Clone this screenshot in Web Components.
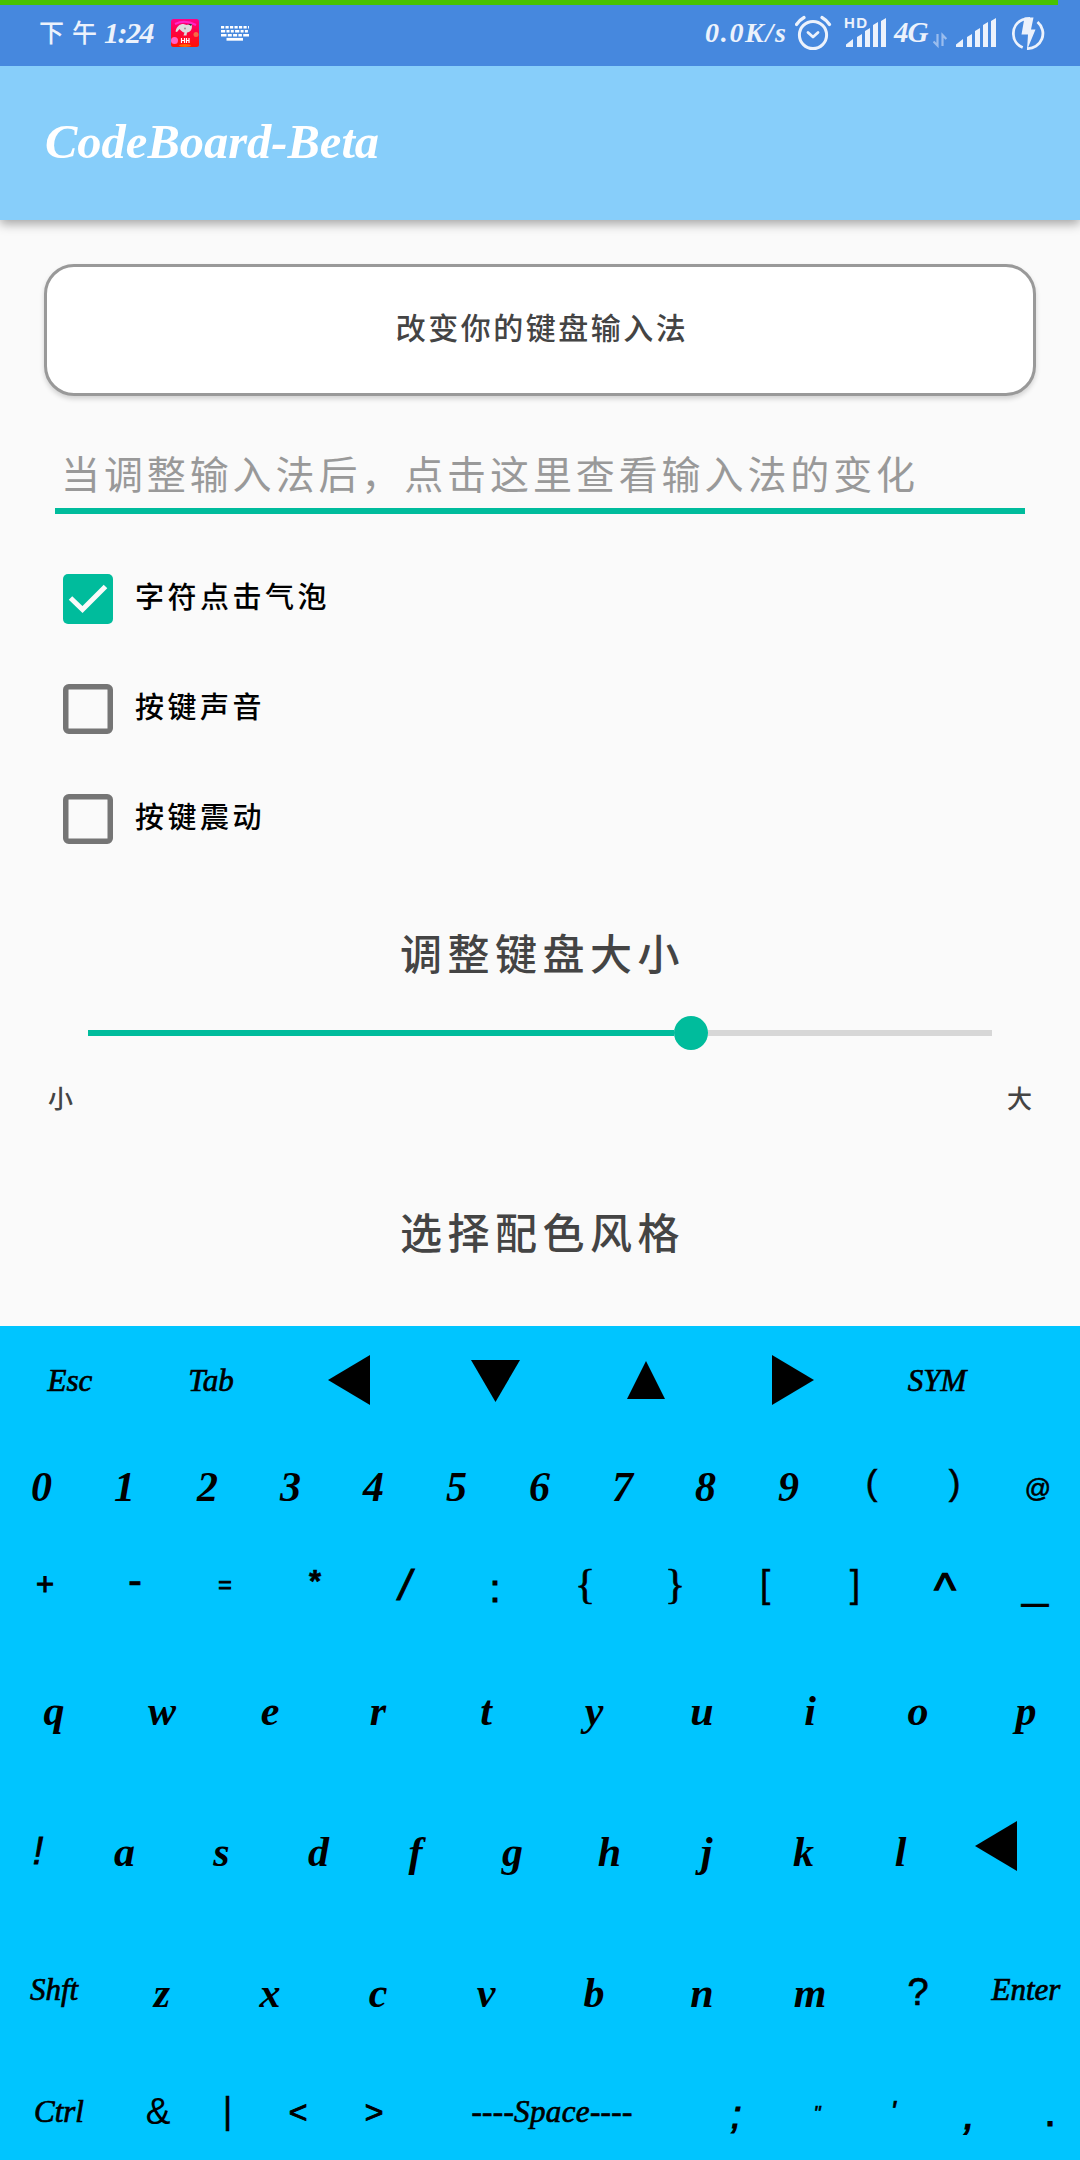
<!DOCTYPE html>
<html lang="zh-CN">
<head>
<meta charset="utf-8">
<title>CodeBoard-Beta</title>
<style>
html,body{margin:0;padding:0}
body{width:1080px;height:2160px;overflow:hidden;background:#fafafa;display:flex;flex-direction:column;
font-family:"Liberation Serif","Noto Sans CJK SC",serif}
</style>
</head>
<body>
<status-bar></status-bar>
<app-bar>CodeBoard-Beta</app-bar>
<settings-page>
  <outline-button>改变你的键盘输入法</outline-button>
  <hint-field>当调整输入法后，点击这里查看输入法的变化</hint-field>
  <check-row checked>字符点击气泡</check-row>
  <check-row>按键声音</check-row>
  <check-row>按键震动</check-row>
  <section-title style="--top:51px">调整键盘大小</section-title>
  <size-slider><span slot="min">小</span><span slot="max">大</span></size-slider>
  <section-title style="--top:85px">选择配色风格</section-title>
</settings-page>
<code-keyboard></code-keyboard>
<script>
class Base extends HTMLElement{
  constructor(){super();this.attachShadow({mode:'open'}).innerHTML=this.view()}
}
const bars=x=>`<path d="M${x} 47v-2.500l7-5.500v8zM${x+11} 47v-10l5-3v13zM${x+19} 47v-16l5-3v19zM${x+27} 47v-22l5-3v25zM${x+35} 47v-26l5-3v29z" fill="#ecf2fc"/>`;

class StatusBar extends Base{
  view(){return `<style>
  :host{display:flex;flex-direction:column;height:66px;background:#4688de;color:#ecf2fc;flex:none;z-index:2}
  .charge{height:5px;width:1058px;background:#48c200}
  .row{display:flex;height:61px;line-height:57px;white-space:nowrap}
  .time{width:131px;padding-left:39px;display:flex}
  .cn{font-size:25px;letter-spacing:8px;font-weight:500;width:65px}
  .num{font:italic bold 30px/56px "Liberation Serif",serif;letter-spacing:-1.5px}
  .spd{font:italic bold 28px/55px "Liberation Serif",serif;letter-spacing:1.7px;width:90px;margin-left:451px}
  .net{font:italic bold 29px/54px "Liberation Serif",serif;width:39px;padding-left:7px;letter-spacing:-1px}
  svg{display:block;margin-top:-5px;flex:none}
  text{font-family:"Liberation Sans",sans-serif}
  </style>
  <div class="charge"></div>
  <div class="row">
   <div class="time"><span class="cn">下午</span><span class="num">1:24</span></div>
   <svg width="84" height="66" viewBox="170 0 84 66">
    <defs><linearGradient id="g" x1="0" y1="0" x2="0" y2="1"><stop offset="0" stop-color="#ff008c"/><stop offset=".4" stop-color="#ff0048"/><stop offset="1" stop-color="#ff1200"/></linearGradient></defs>
    <rect x="171" y="19" width="28" height="28" rx="2.5" fill="url(#g)"/>
    <path d="M175 24q10-5 21 1" stroke="#ff28c8" stroke-width="2" fill="none"/>
    <path d="M175.500 31.500c1-5 4-7.500 8-7.500l3 1 5-1c1.500 5-1 8-4.500 8.500l-.5 3h-3l1-3c-2 0-3.500-2-5-3.500l-2.500 3z" fill="#dedede"/>
    <path d="M188 24l4 0-1 2z" fill="#333"/><circle cx="185" cy="28.500" r=".9" fill="#8b8b8b"/>
    <circle cx="174.500" cy="40.500" r="3.500" fill="#ff62c4"/><circle cx="196" cy="34.500" r="2.500" fill="#f56a45"/>
    <ellipse cx="185" cy="45.500" rx="6" ry="1.500" fill="#ff6500"/>
    <path d="M181.500 38v5M184.500 38v5M181.500 40.500h3M186.500 38v5M189 38v5M186.500 40.500h2.500" stroke="#fff" stroke-width="1.200"/>
    <path d="M221 27.300h28" stroke="#fff" stroke-width="2.600" stroke-dasharray="3.200 1.300"/>
    <path d="M221 31.200h28" stroke="#fff" stroke-width="2.600" stroke-dasharray="4.200 1.300 3 1.300 3 1.300"/>
    <path d="M221 35.200h28" stroke="#fff" stroke-width="2.600" stroke-dasharray="5.500 1.300 4 1.300 4 1.300 3.500 1.300 7"/>
    <path d="M226.500 39.300h16.500" stroke="#fff" stroke-width="2.800"/>
   </svg>
   <span class="spd">0.0K/s</span>
   <svg width="92" height="66" viewBox="795 0 92 66">
    <circle cx="813" cy="35" r="13.600" fill="none" stroke="#ecf2fc" stroke-width="3"/>
    <path d="M796.500 24.500q3-4.500 7.500-7M829.500 24.500q-3-4.500-7.500-7" fill="none" stroke="#ecf2fc" stroke-width="3.200" stroke-linecap="round"/>
    <path d="M808 32.500l5 4.500 5-4.500" fill="none" stroke="#ecf2fc" stroke-width="2.800" stroke-linecap="round" stroke-linejoin="round"/>
    ${bars(846)}
    <rect x="844" y="16" width="23" height="13" fill="#4688de"/>
    <text x="844" y="28" font-size="15" font-weight="700" fill="#ecf2fc" textLength="23">HD</text>
   </svg>
   <span class="net">4G</span>
   <svg width="120" height="66" viewBox="933 0 120 66">
    <path d="M937.500 34v11.500l-4-4M942.500 46V35l3.800 4" fill="none" stroke="#9abdee" stroke-width="2.200"/>
    ${bars(956)}
    <path d="M1022.700 47.500a15 15 0 0 1-.2-27.700Q1026 18.400 1030 18.400M1037.500 22a15 15 0 0 1-10.500 26.500" fill="none" stroke="#ecf2fc" stroke-width="2.800"/>
    <path d="M1024.500 17.500h9l-2.500 12h4.500L1027 50l1-15.500h-6.500z" fill="#ecf2fc"/>
   </svg>
  </div>`}
}
class AppBar extends Base{
  view(){return `<style>:host{display:flex;align-items:center;flex:none;height:152px;padding:0 0 2px 45px;background:#87cefa;color:#fff;font:italic bold 48.5px/60px "Liberation Serif",serif;box-shadow:0 4px 10px rgba(0,0,0,.34);z-index:1}</style><slot></slot>`}
}
class SettingsPage extends Base{
  view(){return `<style>:host{display:flex;flex-direction:column;flex:none;height:1106px;background:#fafafa;color:#444}</style><slot></slot>`}
}
class OutlineButton extends Base{
  view(){return `<style>:host{display:block;box-sizing:border-box;flex:none;height:132px;margin:44px 44px 0;padding-left:4px;border:3px solid #999;border-radius:30px;background:#fff;text-align:center;font-size:30px;letter-spacing:2.500px;font-weight:500;line-height:123px;box-shadow:0 3px 5px rgba(0,0,0,.16)}</style><slot></slot>`}
}
class HintField extends Base{
  view(){return `<style>:host{display:block;box-sizing:border-box;flex:none;height:75px;margin:43px 55px 30px;padding:4px 0 0 6px;border-bottom:6px solid #00bc9c;color:#999;font-size:39px;letter-spacing:3.900px;line-height:65px;white-space:nowrap}</style><slot></slot>`}
}
class CheckRow extends Base{
  view(){const on=this.hasAttribute('checked');return `<style>:host{display:flex;align-items:center;flex:none;height:110px;padding-left:63px;color:#000;font-size:29px;letter-spacing:3.500px;font-weight:500}
  span{margin:-9px 0 0 22px}</style>
  <svg width="50" height="50" viewBox="0 0 50 50">${on?'<rect width="50" height="50" rx="5" fill="#00bc9c"/><path d="M7.500 24L19.500 35.500 42.500 12.500" fill="none" stroke="#fafafa" stroke-width="5"/>':'<rect x="2.750" y="2.750" width="44.500" height="44.500" rx="3" fill="none" stroke="#757575" stroke-width="5.500"/>'}</svg>
  <span><slot></slot></span>`}
}
class SectionTitle extends Base{
  view(){return `<style>:host{display:block;flex:none;margin-top:var(--top);height:60px;line-height:63px;padding-left:5px;text-align:center;font-size:42px;letter-spacing:5.500px;font-weight:500}</style><slot></slot>`}
}
class SizeSlider extends Base{
  view(){return `<style>:host{display:block;flex:none}
  .track{display:flex;align-items:center;height:96px;padding:0 88px}
  .on{width:586px;height:6px;background:#00bc9c}.dot{width:34px;height:34px;border-radius:50%;background:#00bc9c}.off{flex:1;height:6px;background:#d7d7d7}
  .ends{display:flex;justify-content:space-between;height:38px;line-height:38px;padding:0 48px;font-size:25px;font-weight:500}</style>
  <div class="track"><div class="on"></div><div class="dot"></div><div class="off"></div></div>
  <div class="ends"><slot name="min"></slot><slot name="max"></slot></div>`}
}
class KeyCap extends Base{
  view(){return `<style>
  :host{display:flex;align-items:center;justify-content:center;height:100%;min-width:0;white-space:pre;font:italic bold 42px/50px "Liberation Serif",serif}
  :host([kind=label]){font-weight:400;font-size:31px;-webkit-text-stroke:.7px #000}
  :host([kind=sym]){font:400 36px/44px "Liberation Sans",sans-serif;-webkit-text-stroke:var(--st,.6px) #000}
  span{display:block;transform:translate(var(--dx,0px),var(--dy,0px))}
  ::slotted(svg){display:block}
  </style><span><slot></slot></span>`}
}
const tri={
 '◀':'<svg width="42" height="50"><path d="M0 25L42 0V50z"/></svg>',
 '▼':'<svg width="49" height="50"><path d="M0 5H49L24.500 47z"/></svg>',
 '▲':'<svg width="38" height="50"><path d="M19 6L38 44H0z"/></svg>',
 '▶':'<svg width="42" height="50"><path d="M42 25L0 0V50z"/></svg>'};
// Each row: height, column widths, keys, vertical shift of the letters.
// A key is a string, or [text, vertical shift, font size, extra style].
const rep=(n,w)=>Array(n).fill(w);
const rows=[
 [108,[140,142,133,160,142,152,136],['Esc','Tab','◀','▼','▲','▶','SYM'],1],
 [105,rep(13,83),[...'0123456789',['(',-4,35],[')',-4,35],['@',1,26,'font-style:italic']],0],
 [94,rep(12,90),[['+',-1,31,'--st:1px'],['-',-5,42,'--st:.6px'],['=',-1,23,'--st:1px'],['*',-4,31,'font-weight:700'],['/',-1,43,'font-style:italic;--st:1px;--sk:-10deg'],[':',3,38,'--st:1.2px'],['{',-2,43,'font-family:Liberation Serif'],['}',-2,43,'font-family:Liberation Serif'],['[',-2,38,'--st:.3px'],[']',-2,38,'--st:.3px'],['^',3,46,'--st:1.4px'],['_',-5,48,'--st:.2px']],0],
 [151,rep(10,108),[...'qwertyuiop'],2],
 [134,[76,...rep(9,97),97],[['!',0,38,'font-style:italic;--st:.8px'],...'asdfghjkl','◀'],1],
 [146,rep(10,108),['Shft',...'zxcvbnm',['?',1,38,'--st:.7px'],'Enter'],2],
 [96,[118,80,59,82,70,286,82,80,72,80,82],['Ctrl',['&',0,37,'--st:.1px'],['|',-1,37,'--st:.4px'],['<',0,32,'--st:1px'],['>',0,32,'--st:1px'],'----Space----',[';',3,38,'font-style:italic;--st:1.2px'],['"',1,20,'font-style:italic'],["'",-1,30,'font-style:italic'],[',',3,42,'font-style:italic;--st:1.2px'],['.',0,42,'--st:1px']],0]
];
class CodeKeyboard extends Base{
  view(){return `<style>:host{display:flex;flex-direction:column;flex:none;height:834px;background:#00c5ff;color:#000;overflow:hidden}
  .row{display:grid;flex:none}svg{display:block}</style>`+rows.map(([h,cols,keys,dy])=>
   `<div class="row" style="height:${h}px;grid-template-columns:${cols.map(c=>c+'px').join(' ')};grid-template-rows:${h}px">`+
   keys.map(k=>{
    if(tri[k])return `<key-cap style="${h===134?'--dx:-2px;--dy:-5px':''}">${tri[k]}</key-cap>`;
    if(Array.isArray(k)){const t=k[0].replace('&','&amp;').replace('<','&lt;');return `<key-cap kind="sym" style="--dy:${k[1]}px;font-size:${k[2]}px;${k[3]||''}">${t}</key-cap>`}
    return k.length>1?`<key-cap kind="label" style="--dy:${h===146?-1:dy}px;${k[1]==='-'?'letter-spacing:.35px':''}">${k}</key-cap>`:`<key-cap style="--dy:${dy}px">${k}</key-cap>`}).join('')+'</div>').join('')}
}
for(const [n,c] of [['status-bar',StatusBar],['app-bar',AppBar],['settings-page',SettingsPage],['outline-button',OutlineButton],['hint-field',HintField],['check-row',CheckRow],['section-title',SectionTitle],['size-slider',SizeSlider],['key-cap',KeyCap],['code-keyboard',CodeKeyboard]])customElements.define(n,c);
</script>
</body>
</html>
